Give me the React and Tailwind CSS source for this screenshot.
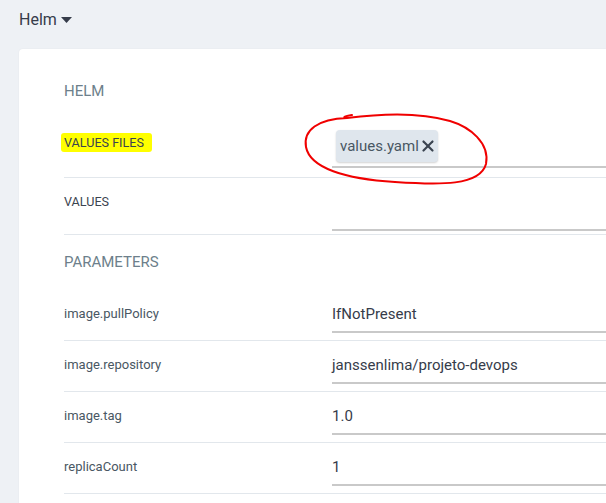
import { X } from "lucide-react";

const params = [
  { key: "image.pullPolicy", value: "IfNotPresent" },
  { key: "image.repository", value: "janssenlima/projeto-devops" },
  { key: "image.tag", value: "1.0" },
  { key: "replicaCount", value: "1" },
];

function ParamRow({ name, value }) {
  return (
    <div className="flex h-[51px] border-b border-[#e2e7ec]">
      <div className="w-[268px] shrink-0 pt-[16px] text-[13px] leading-[16px] text-[#495763]">
        {name}
      </div>
      <div className="flex-1 pt-[14px]">
        <div className="border-b-2 border-[#c9c9c9] pb-[7px] text-[15px] leading-[20px] text-[#363c4a]">
          {value}
        </div>
      </div>
    </div>
  );
}

export default function App() {
  return (
    <div
      className="relative h-[503px] w-[606px] overflow-hidden bg-[#eef1f5]"
      style={{ fontFamily: "Roboto, 'Liberation Sans', sans-serif" }}
    >
      {/* header */}
      <div className="flex h-[49px] items-start pl-[19px] pt-[10px]">
        <span className="text-[16px] leading-[20px] text-[#363c4a]">Helm</span>
        <svg width="11" height="6" viewBox="0 0 11 6" className="ml-[4px] mt-[7px]">
          <path d="M0 0 L11 0 L5.5 6 Z" fill="#363c4a" />
        </svg>
      </div>

      {/* card */}
      <div className="ml-[19px] h-[460px] rounded-tl-[4px] bg-white pl-[45px] pt-[32px] shadow-[0_0_2px_rgba(0,0,0,0.06)]">
        <div className="h-[20px] text-[15px] leading-[20px] text-[#6d7f8b]">HELM</div>

        {/* values files */}
        <div className="flex h-[77px] border-b border-[#e2e7ec]">
          <div className="w-[268px] shrink-0 pt-[34px] text-[12.6px] leading-[16px] text-[#3b4450]">
            <span className="-ml-[3px] rounded-[3px] bg-[#ffff00] py-[2px] pl-[3px] pr-[8px]">VALUES FILES</span>
          </div>
          <div className="flex-1 pt-[29px]">
            <div className="border-b-2 border-[#c9c9c9] pb-[4px] pl-[4px]">
              <div className="inline-flex h-[32px] items-center rounded-[4px] bg-[#dfe6ed] pl-[4px] pr-[1px] text-[15px] text-[#495763] shadow-[0_1px_2px_rgba(0,0,0,0.18)]">
                values.yaml
                <X size={18} strokeWidth={2.2} absoluteStrokeWidth className="text-[#3b4450]" />
              </div>
            </div>
          </div>
        </div>

        {/* values */}
        <div className="flex h-[57px] border-b border-[#e2e7ec]">
          <div className="w-[268px] shrink-0 pt-[16px] text-[12.6px] leading-[16px] text-[#3b4450]">VALUES</div>
          <div className="flex-1 pt-[14px]">
            <div className="h-[39px] border-b-2 border-[#c9c9c9]" />
          </div>
        </div>

        <div className="pb-[18px] pt-[17px] text-[15px] leading-[20px] text-[#6d7f8b]">PARAMETERS</div>

        {params.map((p) => (
          <ParamRow key={p.key} name={p.key} value={p.value} />
        ))}
      </div>

      {/* red hand-drawn annotation */}
      <svg className="pointer-events-none absolute inset-0" width="606" height="503">
        <path
          d="M352 115 C 344 116, 342 118, 347 118 C 318 119, 303 130, 306 147 C 310 168, 345 179, 395 182 C 440 185, 480 186, 486 164 C 490 143, 470 127, 450 121 C 420 112, 385 113, 347 118"
          fill="none"
          stroke="#f00000"
          strokeWidth="2"
          strokeLinecap="round"
        />
      </svg>
    </div>
  );
}
